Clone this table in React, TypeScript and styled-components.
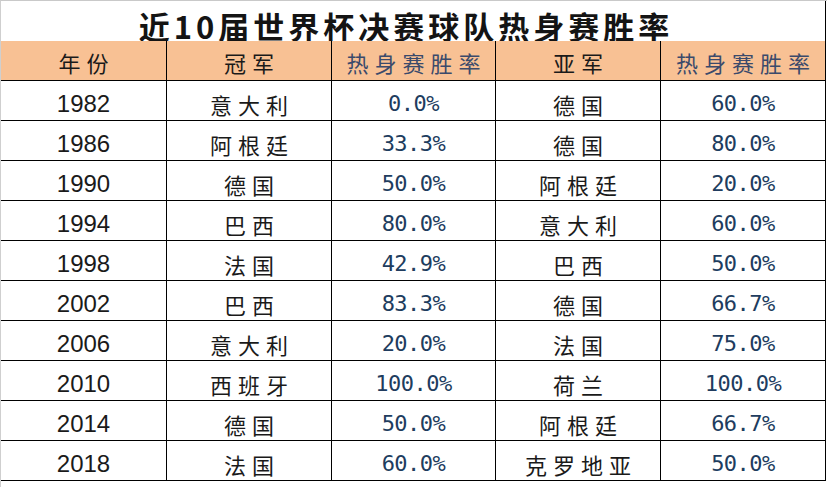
import React from 'react'
import styled, { createGlobalStyle } from 'styled-components'

const GlobalStyle = createGlobalStyle`
	html, body {
		margin: 0;
		padding: 0;
		background: #ffffff;
	}
`

const CJK = `"Noto Sans CJK SC", "Noto Sans", sans-serif`

const Sheet = styled.div`
	width: 827px;
	height: 487px;
	box-sizing: border-box;
	border-top: 1px solid #c9c9c9;
	border-left: 1px solid #cfcfcf;
	background: #ffffff;
`

const Grid = styled.div`
	display: grid;
	grid-template-columns: 166px 165px 164px 165px 165px;
	grid-auto-rows: 40px;
	width: 825px;
`

const TitleCell = styled.div`
	grid-column: 1 / span 5;
	height: 45px;
	box-sizing: border-box;
	border-right: 1px solid #000;
	border-bottom: 1px solid #000;
	display: flex;
	align-items: center;
	justify-content: center;
	padding: 4px 14px 0 0;
	font-family: ${CJK};
	font-weight: 700;
	font-size: 31px;
	letter-spacing: 4px;
	color: #141414;
`

const Cell = styled.div<{ $head?: boolean }>`
	box-sizing: border-box;
	border-right: 1px solid #000;
	border-bottom: 1px solid #000;
	background: ${p => (p.$head ? '#f8c194' : '#ffffff')};
	display: flex;
	align-items: center;
	justify-content: center;
	padding-top: ${p => (p.$head ? '3px' : '6px')};
`

const Name = styled.span<{ $rate?: boolean }>`
	font-family: ${CJK};
	font-size: 22px;
	letter-spacing: 6px;
	margin-right: -6px;
	color: ${p => (p.$rate ? '#3b4a6b' : '#1a1a1a')};
`

const Year = styled.span`
	font-family: "Liberation Sans", Arial, sans-serif;
	font-size: 24px;
	color: #1a1a1a;
`

const Rate = styled.span`
	font-family: "DejaVu Sans Mono", monospace;
	font-size: 22px;
	letter-spacing: -0.5px;
	color: #203c5e;
`

const rows: [string, string, string, string, string][] = [
	['1982', '意大利', '0.0%', '德国', '60.0%'],
	['1986', '阿根廷', '33.3%', '德国', '80.0%'],
	['1990', '德国', '50.0%', '阿根廷', '20.0%'],
	['1994', '巴西', '80.0%', '意大利', '60.0%'],
	['1998', '法国', '42.9%', '巴西', '50.0%'],
	['2002', '巴西', '83.3%', '德国', '66.7%'],
	['2006', '意大利', '20.0%', '法国', '75.0%'],
	['2010', '西班牙', '100.0%', '荷兰', '100.0%'],
	['2014', '德国', '50.0%', '阿根廷', '66.7%'],
	['2018', '法国', '60.0%', '克罗地亚', '50.0%'],
]

const App = () => {
	return <>
		<GlobalStyle />
		<Sheet>
			<Grid>
				<TitleCell>近10届世界杯决赛球队热身赛胜率</TitleCell>

				<Cell $head><Name>年份</Name></Cell>
				<Cell $head><Name>冠军</Name></Cell>
				<Cell $head><Name $rate>热身赛胜率</Name></Cell>
				<Cell $head><Name>亚军</Name></Cell>
				<Cell $head><Name $rate>热身赛胜率</Name></Cell>

				{rows.map(([year, champion, champRate, runnerUp, runnerRate]) => (
					<React.Fragment key={year}>
						<Cell><Year>{year}</Year></Cell>
						<Cell><Name>{champion}</Name></Cell>
						<Cell><Rate>{champRate}</Rate></Cell>
						<Cell><Name>{runnerUp}</Name></Cell>
						<Cell><Rate>{runnerRate}</Rate></Cell>
					</React.Fragment>
				))}
			</Grid>
		</Sheet>
	</>
}

export default App
